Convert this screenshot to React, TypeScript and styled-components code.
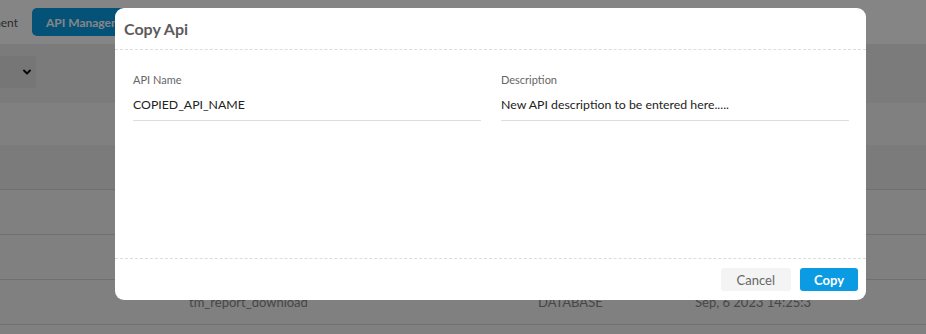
import React from 'react';
import styled, { createGlobalStyle } from 'styled-components';

const GlobalStyle = createGlobalStyle`
	html, body {
		margin: 0;
		padding: 0;
		background: #fff;
	}
	body {
		font-family: Lato, 'Open Sans', 'Liberation Sans', sans-serif;
		overflow: hidden;
	}
	* {
		box-sizing: border-box;
	}
`;

const Page = styled.div`
	position: relative;
	width: 926px;
	height: 334px;
	overflow: hidden;
	background: #f6f6f6;
`;

const TopBar = styled.header`
	height: 44px;
	background: #ffffff;
	display: flex;
	align-items: center;
	gap: 14px;
`;

const TabClip = styled.div`
	width: 18px;
	overflow: hidden;
	display: flex;
	justify-content: flex-end;
	white-space: nowrap;
`;

const Tab = styled.span`
	font-size: 12px;
	color: #555;
`;

const ActiveTab = styled.button`
	height: 28px;
	width: 111px;
	border: none;
	border-radius: 5px;
	background: #0a9ee6;
	color: #fff;
	font-family: inherit;
	font-size: 12px;
	font-weight: 700;
	text-align: left;
	padding: 0 14px;
	white-space: nowrap;
	overflow: hidden;
`;

const Toolbar = styled.div`
	height: 59px;
	background: #ebebeb;
	display: flex;
	align-items: center;
`;

const Select = styled.div`
	width: 36px;
	height: 32px;
	margin-top: -3px;
	background: #e3e3e3;
	border-radius: 0 3px 3px 0;
	display: flex;
	align-items: center;
	justify-content: flex-end;
	padding-right: 3px;
	color: #111;
`;

const Spacer = styled.div`
	height: 42px;
	background: #f6f6f6;
`;

const TableHead = styled.div`
	height: 44px;
	background: #ebebeb;
`;

const Row = styled.div`
	height: 45px;
	border-top: 1px solid #d6d6d6;
	display: grid;
	grid-template-columns: 189px 349px 157px 1fr;
	align-items: center;
	font-size: 13px;
	color: #888;
	background: #f6f6f6;
`;

const Cell = styled.span`
	white-space: nowrap;
	overflow: hidden;
`;

const Overlay = styled.div`
	position: absolute;
	inset: 0;
	background: rgba(0, 0, 0, 0.48);
	padding: 8px 0 0 115px;
`;

const Modal = styled.div`
	width: 751px;
	height: 292px;
	background: #fff;
	border-radius: 9px;
	display: flex;
	flex-direction: column;
	overflow: hidden;
`;

const ModalHeader = styled.div`
	height: 42px;
	border-bottom: 1px dashed #dcdcdc;
	display: flex;
	align-items: center;
	padding: 0 9px;
	font-size: 16px;
	font-weight: 700;
	color: #5c5c5c;
`;

const ModalBody = styled.div`
	flex: 1;
	display: grid;
	grid-template-columns: 1fr 1fr;
	column-gap: 20px;
	align-content: start;
	padding: 23px 17px 0 18px;
`;

const Field = styled.div`
	display: flex;
	flex-direction: column;
`;

const Label = styled.label`
	font-size: 11px;
	color: #666;
	line-height: 14px;
`;

const Value = styled.div`
	margin-top: 10px;
	padding-bottom: 7px;
	font-size: 12.3px;
	line-height: 16px;
	color: #222;
	border-bottom: 1px solid #dcdce4;
`;

const ModalFooter = styled.div`
	height: 42px;
	border-top: 1px dashed #dcdcdc;
	display: flex;
	justify-content: flex-end;
	align-items: flex-start;
	gap: 9px;
	padding: 9px 8px 0 0;
`;

const FooterButton = styled.button<{ $primary?: boolean }>`
	height: 23px;
	border: none;
	border-radius: 3px;
	padding: 0 ${(p) => (p.$primary ? 14 : 16)}px;
	font-family: inherit;
	font-size: 13px;
	font-weight: ${(p) => (p.$primary ? 700 : 400)};
	background: ${(p) => (p.$primary ? '#0a9be3' : '#f4f4f4')};
	color: ${(p) => (p.$primary ? '#fff' : '#666')};
`;

const rows = [
	{ name: 'tm_user_export', type: 'DATABASE', date: 'Sep, 6 2023 14:21:1' },
	{ name: 'tm_report_list', type: 'DATABASE', date: 'Sep, 6 2023 14:23:4' },
	{ name: 'tm_report_download', type: 'DATABASE', date: 'Sep, 6 2023 14:25:3' },
	{ name: '', type: '', date: '' },
];

export default function App() {
	return (
		<>
			<GlobalStyle />
			<Page>
				<TopBar>
					<TabClip>
						<Tab>Management</Tab>
					</TabClip>
					<ActiveTab>API Management</ActiveTab>
				</TopBar>
				<Toolbar>
					<Select>
						<svg width="12" height="12" viewBox="0 0 24 24" fill="none" stroke="currentColor" strokeWidth="4" strokeLinecap="round" strokeLinejoin="round">
							<path d="M6 9l6 6 6-6" />
						</svg>
					</Select>
				</Toolbar>
				<Spacer />
				<TableHead />
				{rows.map((r, i) => (
					<Row key={i}>
						<span />
						<Cell>{r.name}</Cell>
						<Cell>{r.type}</Cell>
						<Cell>{r.date}</Cell>
					</Row>
				))}
				<Overlay>
					<Modal>
						<ModalHeader>Copy Api</ModalHeader>
						<ModalBody>
							<Field>
								<Label>API Name</Label>
								<Value>COPIED_API_NAME</Value>
							</Field>
							<Field>
								<Label>Description</Label>
								<Value>New API description to be entered here.....</Value>
							</Field>
						</ModalBody>
						<ModalFooter>
							<FooterButton>Cancel</FooterButton>
							<FooterButton $primary>Copy</FooterButton>
						</ModalFooter>
					</Modal>
				</Overlay>
			</Page>
		</>
	);
}
